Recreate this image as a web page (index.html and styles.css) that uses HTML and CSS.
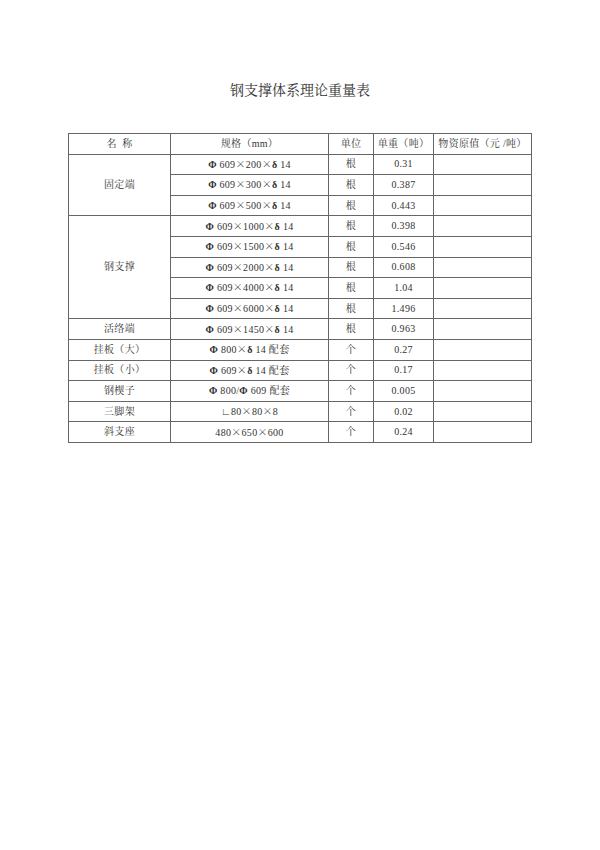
FILE: index.html
```html
<!DOCTYPE html>
<html lang="zh">
<head>
<meta charset="utf-8">
<link rel="stylesheet" href="styles.css">
</head>
<body>
<div class="page">
  <h1 class="title">钢支撑体系理论重量表</h1>
  <table class="sheet">
    <colgroup>
      <col class="c1"><col class="c2"><col class="c3"><col class="c4"><col class="c5">
    </colgroup>
    <tr><td>名&nbsp;&nbsp;称</td><td>规格（mm）</td><td>单位</td><td>单重（吨）</td><td>物资原值（元 /吨）</td></tr>
    <tr><td rowspan="3">固定端</td><td><b>Φ</b> 609<span class="x">×</span>200<span class="x">×</span><b>δ</b> 14</td><td>根</td><td>0.31</td><td></td></tr>
    <tr><td><b>Φ</b> 609<span class="x">×</span>300<span class="x">×</span><b>δ</b> 14</td><td>根</td><td>0.387</td><td></td></tr>
    <tr><td><b>Φ</b> 609<span class="x">×</span>500<span class="x">×</span><b>δ</b> 14</td><td>根</td><td>0.443</td><td></td></tr>
    <tr><td rowspan="5">钢支撑</td><td><b>Φ</b> 609<span class="x">×</span>1000<span class="x">×</span><b>δ</b> 14</td><td>根</td><td>0.398</td><td></td></tr>
    <tr><td><b>Φ</b> 609<span class="x">×</span>1500<span class="x">×</span><b>δ</b> 14</td><td>根</td><td>0.546</td><td></td></tr>
    <tr><td><b>Φ</b> 609<span class="x">×</span>2000<span class="x">×</span><b>δ</b> 14</td><td>根</td><td>0.608</td><td></td></tr>
    <tr><td><b>Φ</b> 609<span class="x">×</span>4000<span class="x">×</span><b>δ</b> 14</td><td>根</td><td>1.04</td><td></td></tr>
    <tr><td><b>Φ</b> 609<span class="x">×</span>6000<span class="x">×</span><b>δ</b> 14</td><td>根</td><td>1.496</td><td></td></tr>
    <tr><td>活络端</td><td><b>Φ</b> 609<span class="x">×</span>1450<span class="x">×</span><b>δ</b> 14</td><td>根</td><td>0.963</td><td></td></tr>
    <tr><td>挂板（大）</td><td><b>Φ</b> 800<span class="x">×</span><b>δ</b> 14 配套</td><td>个</td><td>0.27</td><td></td></tr>
    <tr><td>挂板（小）</td><td><b>Φ</b> 609<span class="x">×</span><b>δ</b> 14 配套</td><td>个</td><td>0.17</td><td></td></tr>
    <tr><td>钢楔子</td><td><b>Φ</b> 800/<b>Φ</b> 609 配套</td><td>个</td><td>0.005</td><td></td></tr>
    <tr><td>三脚架</td><td>∟80<span class="x">×</span>80<span class="x">×</span>8</td><td>个</td><td>0.02</td><td></td></tr>
    <tr><td>斜支座</td><td>480<span class="x">×</span>650<span class="x">×</span>600</td><td>个</td><td>0.24</td><td></td></tr>
  </table>
</div>
</body>
</html>
```
FILE: styles.css
```css
html, body {
  margin: 0;
  padding: 0;
  background: #fff;
}
.page {
  width: 600px;
  height: 850px;
  padding-top: 83px;
  box-sizing: border-box;
  font-family: "Liberation Serif", "Noto Serif CJK SC", "Noto Sans CJK SC", serif;
  color: #333;
}
.title {
  margin: 0 0 34px 0;
  text-align: center;
  font-size: 14px;
  font-weight: normal;
  line-height: 16px;
  color: #333;
}
.sheet {
  margin-left: 68px;
  width: 463px;
  border-collapse: collapse;
  table-layout: fixed;
  border: 1.5px solid #555;
  font-size: 10px;
  letter-spacing: 0.3px;
}
.c1 { width: 102px; }
.c2 { width: 158px; }
.c3 { width: 45px; }
.c4 { width: 60px; }
.c5 { width: 98px; }
.sheet td {
  border: 1px solid #666;
  height: 19.6px;
  padding: 0;
  text-align: center;
  vertical-align: middle;
  line-height: 12px;
  white-space: nowrap;
}
.sheet b {
  font-weight: bold;
}
.x {
  font-family: "Noto Serif CJK SC", "Noto Sans CJK SC", serif;
}
```
